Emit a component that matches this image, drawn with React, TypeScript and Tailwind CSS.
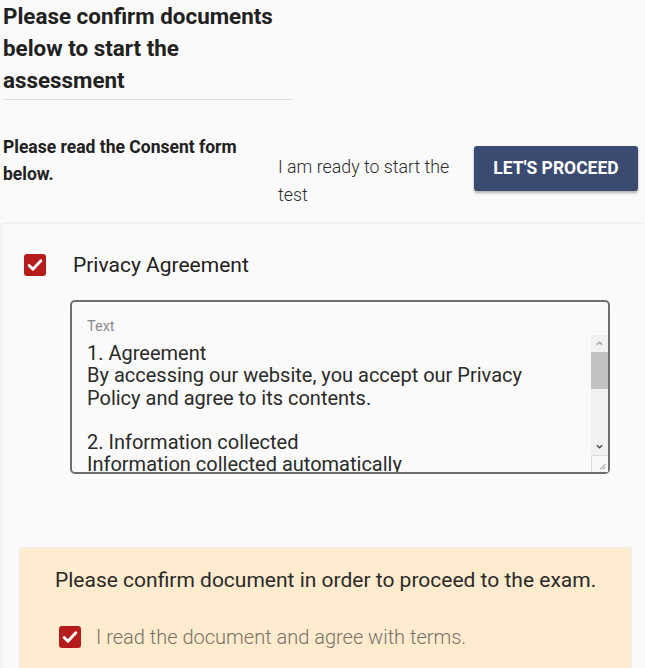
import { useState } from "react"

const policy = `1. Agreement
By accessing our website, you accept our Privacy Policy and agree to its contents.

2. Information collected
Information collected automatically
We collect information about your device and how you use our website, such as pages visited and time spent.`

const Check = () => (
    <span className="w-[22px] h-[22px] shrink-0 rounded-[3px] bg-[#b71c1c] flex items-center justify-center">
        <svg viewBox="0 0 24 24" className="w-[20px] h-[20px]" fill="none" stroke="white" strokeWidth="3.4" strokeLinecap="round" strokeLinejoin="round">
            <path d="M5 12.5l4.5 4.5L19 7" />
        </svg>
    </span>
)

const App = () => {
    const [agreed] = useState(true)
    return (
        <div className="h-[668px] bg-[#fafafa] font-['Roboto',sans-serif] text-[#212121] overflow-hidden">
            <section className="pl-[3px]">
                <h1 className="w-[290px] text-[22.4px] leading-[32px] font-bold pb-[3px] border-b border-[#dcdcdc]">
                    Please confirm documents below to start the assessment
                </h1>
            </section>

            <section className="flex items-start pl-[3px] pr-[7px] mt-[34px]">
                <p className="w-[250px] text-[17.5px] leading-[27px] font-bold">Please read the Consent form below.</p>
                <p className="ml-[25px] mt-[19px] w-[185px] text-[17.8px] leading-[28px] font-light text-[#2e2e2e]">I am ready to start the test</p>
                <button className="ml-auto mt-[12px] w-[164px] h-[45px] rounded-[3px] bg-[#3b4a70] text-white font-bold text-[17.5px] uppercase shadow-[0_2px_3px_rgba(0,0,0,0.3)]">
                    Let's proceed
                </button>
            </section>

            <section className="mt-[15px] ml-[2px] bg-[#fafafa] shadow-[0_0_3px_rgba(0,0,0,0.12)] pt-[29px]">
                <div className="flex items-center pl-[22px] gap-[27px]">
                    {agreed && <Check />}
                    <span className="text-[21px] leading-[24px]">Privacy Agreement</span>
                </div>

                <div className="ml-[68px] mt-[23px] w-[540px] h-[174px] border-2 border-[#6e6e6e] rounded-[5px] flex flex-col">
                    <label className="pl-[15px] pt-[16px] text-[14.5px] leading-[17px] text-[#8a8a8a]">Text</label>
                    <div className="flex flex-1 min-h-0">
                        <textarea
                            readOnly
                            defaultValue={policy}
                            className="flex-1 pt-[7px] pl-[15px] pr-[30px] text-[20px] leading-[22.3px] text-[#2a2a2a] bg-transparent outline-none overflow-hidden resize-none"
                        />
                        <div className="w-[17px] bg-[#f1f1f1] flex flex-col">
                            <div className="h-[17px] flex items-center justify-center text-[#a3a3a3]">
                                <svg viewBox="0 0 10 10" className="w-[9px] h-[9px]" fill="none" stroke="currentColor" strokeWidth="1.6"><path d="M2 6.5L5 3.5L8 6.5" /></svg>
                            </div>
                            <div className="h-[37px] bg-[#c1c1c1]" />
                            <div className="flex-1" />
                            <div className="h-[17px] flex items-center justify-center text-[#505050]">
                                <svg viewBox="0 0 10 10" className="w-[9px] h-[9px]" fill="none" stroke="currentColor" strokeWidth="1.6"><path d="M2 3.5L5 6.5L8 3.5" /></svg>
                            </div>
                            <div className="h-[17px] bg-[#f8f8f8] border-t border-l border-[#dcdcdc] flex items-end justify-end p-[2px]">
                                <svg viewBox="0 0 10 10" className="w-[8px] h-[8px]" fill="none" stroke="#6a6a6a" strokeWidth="1.2"><path d="M9 3L3 9M9 6.5L6.5 9" /></svg>
                            </div>
                        </div>
                    </div>
                </div>

                <div className="ml-[18px] mr-[14px] mt-[74px] bg-[#ffebcd] shadow-[0_0_2px_rgba(0,0,0,0.15)] pt-[20px] pb-[20px]">
                    <p className="pl-[35px] text-[21px] leading-[24px] text-[#2a2a2a]">
                        Please confirm document in order to proceed to the exam.
                    </p>
                    <div className="flex items-center pl-[39px] mt-[33px] gap-[15px]">
                        <Check />
                        <span className="text-[20px] leading-[24px] font-light text-[#77716a]">I read the document and agree with terms.</span>
                    </div>
                </div>
            </section>
        </div>
    )
}

export default App
